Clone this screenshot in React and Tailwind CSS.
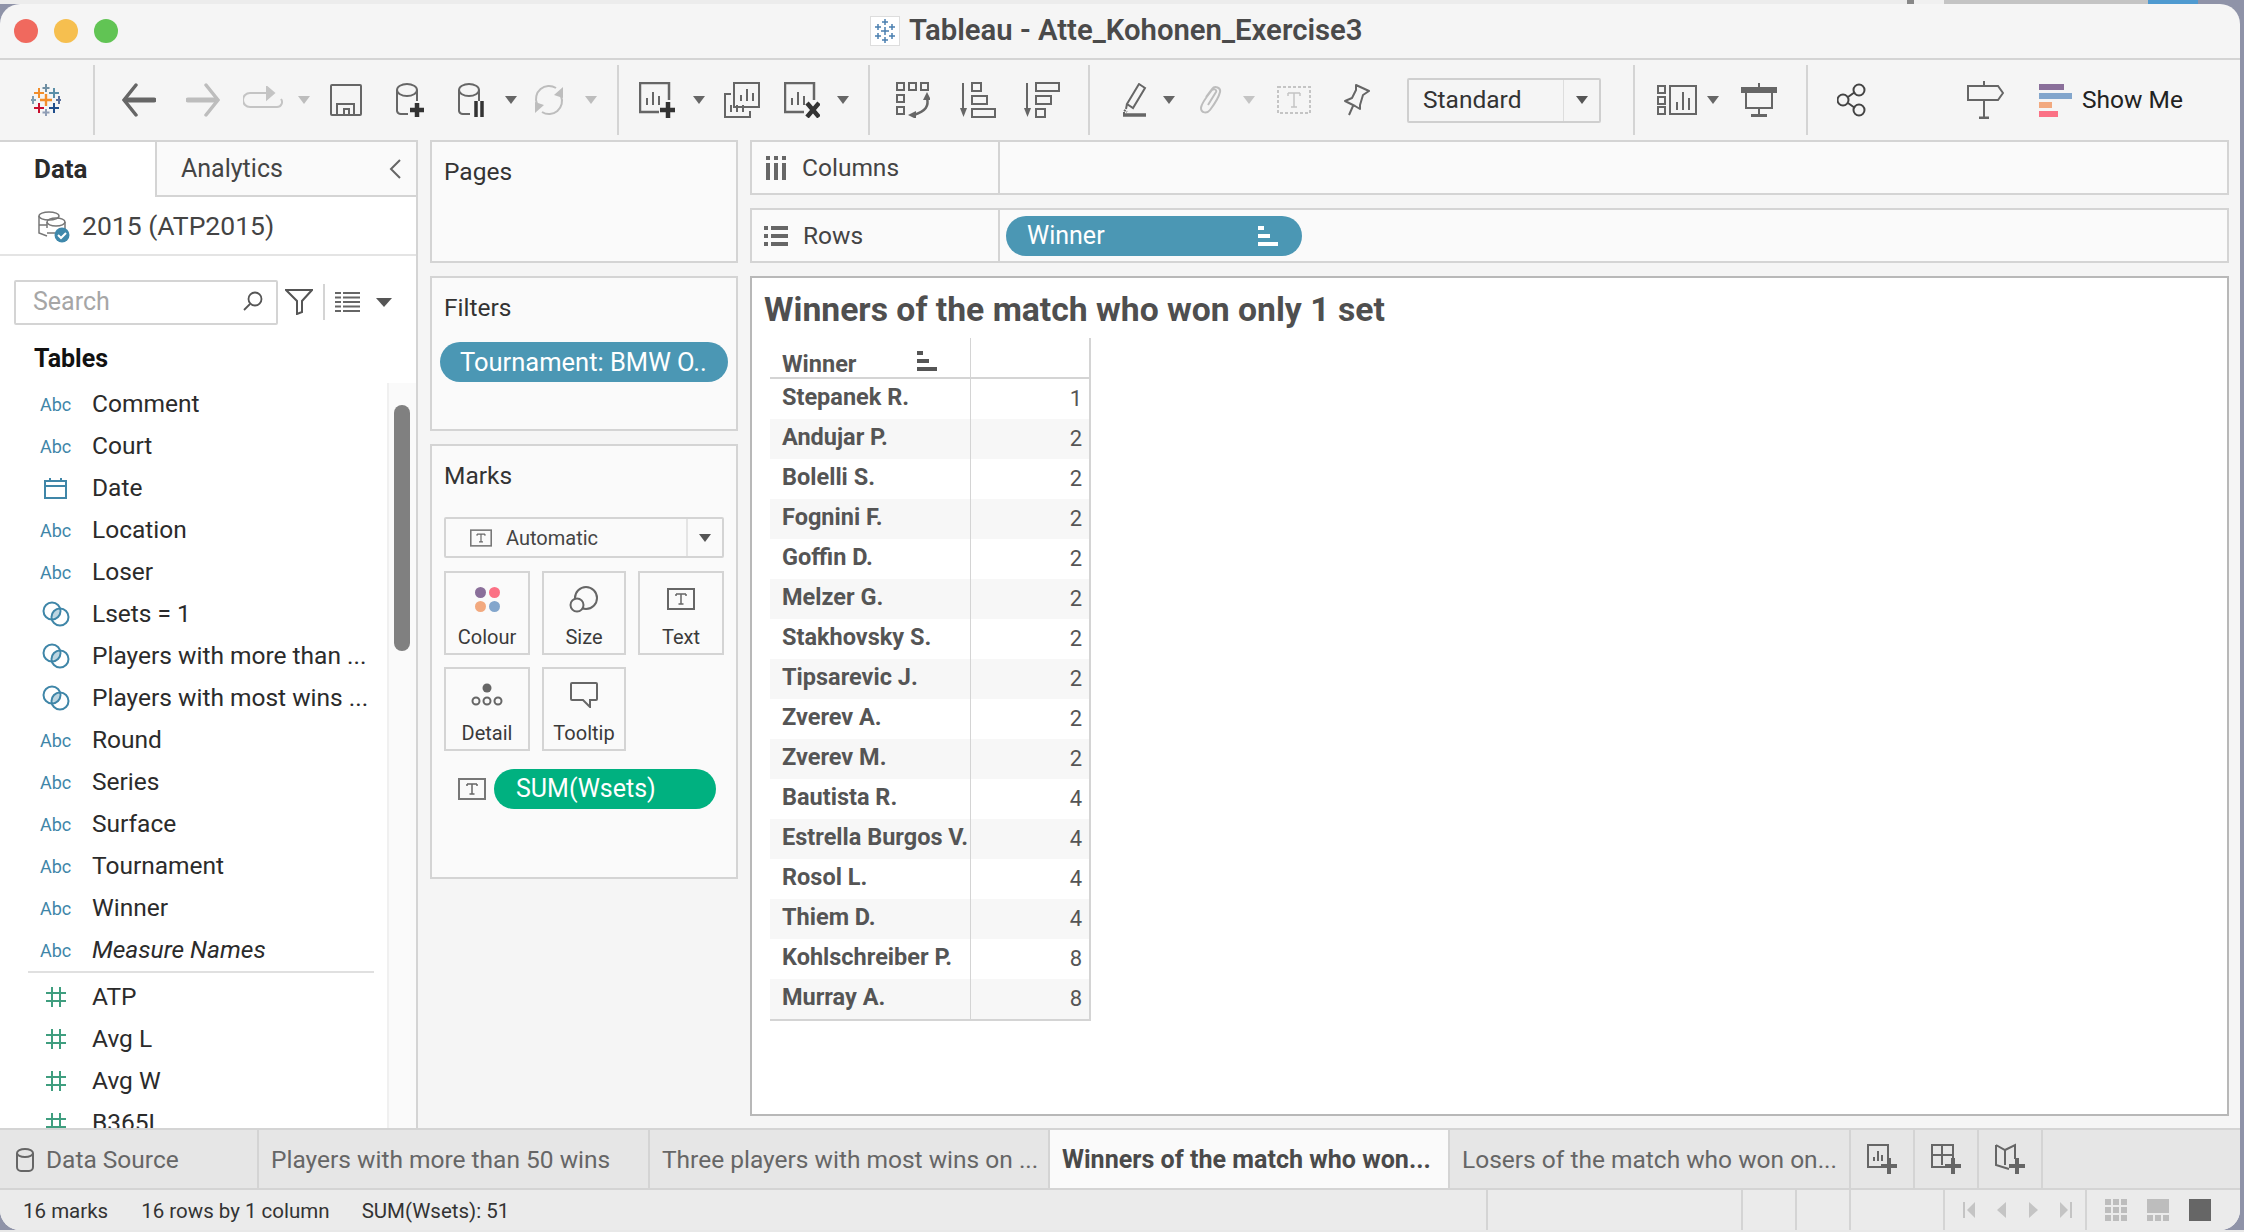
import React from 'react';

const ui = { fontFamily: 'Roboto, sans-serif' };

const Caret = ({ className = '', color = '#666' }) => (
  <svg width="12" height="8" viewBox="0 0 12 8" className={className}>
    <path d="M0 0h12L6 8z" fill={color} />
  </svg>
);

const Sep = ({ className = '' }) => <div className={`w-[2px] h-[70px] bg-[#d4d4d4] ${className}`} />;

const TableauLogo = ({ className = '' }) => (
  <svg width="30" height="32" viewBox="0 0 30 32" className={className} strokeWidth="2">
    <path d="M15 10v12M9 16h12" stroke="#f28e2b" strokeWidth="2.4" />
    <path d="M15 0v8M11.500 4h7" stroke="#6f8fa3" />
    <path d="M8 4v10M3 9h10" stroke="#f28e2b" />
    <path d="M23 4v10M18 9h10" stroke="#5b8fa8" />
    <path d="M2 12v8M-1 16h6" stroke="#7f9db0" />
    <path d="M28 12v8M25 16h6" stroke="#59709c" />
    <path d="M8 19v10M3 24h10" stroke="#c8102e" />
    <path d="M23 19v10M18 24h10" stroke="#1f4e8c" />
    <path d="M15 25v7M11.500 28.500h7" stroke="#8f9db5" />
  </svg>
);

const BackArrow = ({ className = '', color = '#666', flip }) => (
  <svg width="34" height="34" viewBox="0 0 34 34" className={className} fill="none" stroke={color} strokeLinecap="round">
    {flip ? (
      <>
        <path d="M2 17h26" strokeWidth="5" />
        <path d="M20 2l12 15-12 15" strokeWidth="3.500" />
      </>
    ) : (
      <>
        <path d="M32 17H6" strokeWidth="5" />
        <path d="M14 2L2 17l12 15" strokeWidth="3.500" />
      </>
    )}
  </svg>
);

const LoopIcon = ({ className = '' }) => (
  <svg width="40" height="28" viewBox="0 0 40 28" className={className} fill="none" stroke="#c4c4c4" strokeWidth="2">
    <path d="M24 7H7a6 6 0 0 0 0 14h27a5 5 0 0 0 4-8" />
    <path d="M24 1l7 6-7 6z" fill="#c4c4c4" />
  </svg>
);

const SaveIcon = ({ className = '' }) => (
  <svg width="32" height="32" viewBox="0 0 32 32" className={className} fill="none" stroke="#666" strokeWidth="2">
    <rect x="1" y="1" width="30" height="30" rx="1" />
    <path d="M7 31V20h17v11M14 31v-6h5v6" />
  </svg>
);

const DbIcon = ({ className = '', children }) => (
  <svg width="30" height="34" viewBox="0 0 30 34" className={className} fill="none" stroke="#666" strokeWidth="2">
    <path d="M1 7v21a4 4 0 0 0 4 3h7M21 7v11" />
    <ellipse cx="11" cy="7" rx="10" ry="6" />
    {children}
  </svg>
);

const Refresh = ({ className = '' }) => (
  <svg width="34" height="34" viewBox="0 0 34 34" className={className} fill="none" stroke="#bdbdbd" strokeWidth="2">
    <path d="M5 21A13 13 0 0 1 24 5M29 13a13 13 0 0 1-19 16" />
    <path d="M31 4v11l-9-3zM3 30V19l9 3z" fill="#bdbdbd" stroke="none" />
  </svg>
);

const SheetIcon = ({ className = '', mark }) => (
  <svg width="36" height="36" viewBox="0 0 36 36" className={className} fill="none" stroke="#666" strokeWidth="2">
    <path d="M20 30H1V1h29v17" strokeWidth="2.500" />
    <path d="M8 23v-7M14 23V10M20 23v-9" />
    {mark === 'plus' && <path d="M29 20v16M21 28h15" stroke="#333" strokeWidth="4.500" />}
    {mark === 'x' && <path d="M23 21l12 14M35 21L23 35" stroke="#333" strokeWidth="4.500" />}
  </svg>
);

const Duplicate = ({ className = '' }) => (
  <svg width="36" height="36" viewBox="0 0 36 36" className={className} fill="none" stroke="#666" strokeWidth="2">
    <rect x="10" y="1" width="25" height="24" />
    <path d="M17 19v-6M23 19V7M29 19v-8" />
    <path d="M7 12H1v23h25v-6" />
    <path d="M7 23v7M13 23v7M19 23v7" />
  </svg>
);

const SwapIcon = ({ className = '' }) => (
  <svg width="34" height="36" viewBox="0 0 34 36" className={className} fill="none" stroke="#666" strokeWidth="2">
    <rect x="1" y="1" width="7" height="7" />
    <rect x="13" y="1" width="7" height="7" />
    <rect x="25" y="1" width="7" height="7" />
    <rect x="1" y="13" width="7" height="7" />
    <rect x="1" y="25" width="7" height="7" />
    <path d="M31 16c2 8-1 13-13 17" strokeWidth="2.500" />
    <path d="M31 10l-4 8h8zM12 33l8-4v8z" fill="#666" stroke="none" />
  </svg>
);

const SortAsc = ({ className = '', desc }) => (
  <svg width="36" height="36" viewBox="0 0 36 36" className={className} fill="none" stroke="#666" strokeWidth="2">
    <path d="M3 1v28" />
    <path d="M0 26h7l-3.500 9z" fill="#666" stroke="none" />
    {desc ? (
      <>
        <rect x="12" y="1" width="23" height="8" />
        <rect x="12" y="14" width="15" height="8" />
        <rect x="12" y="27" width="9" height="8" />
      </>
    ) : (
      <>
        <rect x="12" y="1" width="9" height="8" />
        <rect x="12" y="14" width="15" height="8" />
        <rect x="12" y="27" width="23" height="8" />
      </>
    )}
  </svg>
);

const Highlighter = ({ className = '' }) => (
  <svg width="24" height="34" viewBox="0 0 24 34" className={className} fill="none" stroke="#666" strokeWidth="2">
    <path d="M16 1l6 4-12 20-6-4zM4 21l-1 5" />
    <path d="M1 27l3 2M0 30h3" strokeDasharray="2 1" />
    <path d="M0 32h23" strokeWidth="3.500" />
  </svg>
);

const Clip = ({ className = '' }) => (
  <svg width="24" height="30" viewBox="0 0 24 30" className={className} fill="none" stroke="#bdbdbd" strokeWidth="2">
    <path d="M7 12l6-8c3-4 9-1 8 3-1 5-7 14-10 18-3 4-9 3-9-2 0-3 7-13 11-18 2-2 5 0 4 2l-8 13" />
  </svg>
);

const TBox = ({ className = '' }) => (
  <svg width="34" height="28" viewBox="0 0 34 28" className={className} fill="none" stroke="#c4c4c4" strokeWidth="2">
    <rect x="1" y="1" width="32" height="26" strokeDasharray="3 2" />
    <path d="M11 7h12M17 7v14M14 21h6M11 7v3M23 7v3" strokeWidth="1.500" />
  </svg>
);

const Pin = ({ className = '' }) => (
  <svg width="26" height="32" viewBox="0 0 26 32" className={className} fill="none" stroke="#666" strokeWidth="2">
    <path d="M12 1l13 6-6 4-3 10 0 4-5-3-10-5 7-3 4-8zM9 22l-4 9" strokeLinejoin="round" />
  </svg>
);

const BarsIcon = ({ className = '' }) => (
  <svg width="40" height="30" viewBox="0 0 40 30" className={className} fill="none" stroke="#666" strokeWidth="2">
    <rect x="1" y="1" width="7" height="7" />
    <rect x="1" y="12" width="7" height="7" />
    <rect x="1" y="22" width="7" height="7" />
    <rect x="13" y="1" width="26" height="28" />
    <path d="M20 25v-8M26 25V7M32 25V13" />
  </svg>
);

const Presentation = ({ className = '' }) => (
  <svg width="36" height="34" viewBox="0 0 36 34" className={className} fill="none" stroke="#666" strokeWidth="2">
    <path d="M18 0v4M18 24v9M10 33h16" />
    <rect x="0" y="4" width="36" height="6" fill="#666" stroke="none" />
    <rect x="5" y="8" width="26" height="17" />
    <path d="M10 32.500h16" strokeWidth="3" />
  </svg>
);

const Share = ({ className = '' }) => (
  <svg width="30" height="34" viewBox="0 0 30 34" className={className} fill="none" stroke="#444" strokeWidth="2">
    <circle cx="22" cy="7" r="5.500" />
    <circle cx="6" cy="17" r="5.500" />
    <circle cx="22" cy="27" r="5.500" />
    <path d="M11 14l7-5M11 20l7 5" />
  </svg>
);

const Signpost = ({ className = '' }) => (
  <svg width="37" height="38" viewBox="0 0 37 38" className={className} fill="none" stroke="#666" strokeWidth="2">
    <path d="M17 0v5M17 20v16" />
    <path d="M1 5h30l5 7-5 7H1z" />
    <path d="M12 37h10" strokeWidth="3" />
  </svg>
);

const ShowMeIcon = ({ className = '' }) => (
  <div className={`flex flex-col gap-[3px] ${className}`}>
    <div className="w-[25px] h-[6px] bg-[#8a6f9a]" />
    <div className="w-[33px] h-[6px] bg-[#83a6cc]" />
    <div className="w-[13px] h-[6px] bg-[#f2a97f]" />
    <div className="w-[19px] h-[6px] bg-[#fb7185]" />
  </div>
);

const SortMini = ({ color = '#555' }) => (
  <svg width="20" height="20" viewBox="0 0 20 20">
    <path d="M0 0h6v4H0zM0 8h12v4H0zM0 16h20v4H0z" fill={color} />
  </svg>
);

const TIcon = ({ w = 22, h = 18, className = '', color = '#777' }) => (
  <svg width={w} height={h} viewBox="0 0 28 22" className={className} fill="none" stroke={color} strokeWidth="2">
    <rect x="1" y="1" width="26" height="20" />
    <path d="M9 6h10M14 6v10M11.500 16h5M9 6v2M19 6v2" strokeWidth="1.500" stroke="#666" />
  </svg>
);

const AbcIcon = () => <span className="text-[18px] text-[#3f86a8]">Abc</span>;

const DateIcon = () => (
  <svg width="23" height="21" viewBox="0 0 23 21" fill="none" stroke="#3f86a8" strokeWidth="2" className="ml-[4px]">
    <rect x="1" y="3" width="21" height="17" />
    <path d="M1 8h21M6 0v4M17 0v4" />
  </svg>
);

const SetIcon = () => (
  <svg width="28" height="26" viewBox="0 0 28 26" fill="none" stroke="#3f86a8" strokeWidth="2" className="ml-[2px]">
    <circle cx="10" cy="10" r="8.500" />
    <circle cx="18" cy="16" r="8.500" />
    <path d="M11 10a8 8 0 0 1 6-1 8 8 0 0 1-1 8 8 8 0 0 1-6-1z" fill="#3f86a8" fillOpacity="0.35" stroke="none" />
  </svg>
);

const HashIcon = () => (
  <svg width="20" height="20" viewBox="0 0 20 20" fill="none" stroke="#3f9e7f" strokeWidth="2" className="ml-[6px]">
    <path d="M6 0v20M14 0v20M0 6h20M0 14h20" />
  </svg>
);

const dims = [
  ['abc', 'Comment'],
  ['abc', 'Court'],
  ['date', 'Date'],
  ['abc', 'Location'],
  ['abc', 'Loser'],
  ['set', 'Lsets = 1'],
  ['set', 'Players with more than ...'],
  ['set', 'Players with most wins ...'],
  ['abc', 'Round'],
  ['abc', 'Series'],
  ['abc', 'Surface'],
  ['abc', 'Tournament'],
  ['abc', 'Winner'],
];

const measures = ['ATP', 'Avg L', 'Avg W', 'B365L'];

const FieldRow = ({ kind, label, italic }) => (
  <div className="h-[42px] flex items-center shrink-0">
    <div className="w-[52px] flex items-center">
      {kind === 'abc' && <AbcIcon />}
      {kind === 'date' && <DateIcon />}
      {kind === 'set' && <SetIcon />}
      {kind === 'hash' && <HashIcon />}
    </div>
    <span className={`text-[24.500px] text-[#2b2b2b] whitespace-nowrap ${italic ? 'italic' : ''}`}>{label}</span>
  </div>
);

const rows = [
  ['Stepanek R.', 1], ['Andujar P.', 2], ['Bolelli S.', 2], ['Fognini F.', 2],
  ['Goffin D.', 2], ['Melzer G.', 2], ['Stakhovsky S.', 2], ['Tipsarevic J.', 2],
  ['Zverev A.', 2], ['Zverev M.', 2], ['Bautista R.', 4], ['Estrella Burgos V.', 4],
  ['Rosol L.', 4], ['Thiem D.', 4], ['Kohlschreiber P.', 8], ['Murray A.', 8],
];

const MarkButton = ({ icon, label, className = '' }) => (
  <div className={`h-[84px] border-2 border-[#d4d4d4] flex flex-col items-center ${className}`}>
    <div className="h-[52px] flex items-center justify-center">{icon}</div>
    <span className="text-[20px] leading-[24px] text-[#3a3a3a]">{label}</span>
  </div>
);

const SheetTab = ({ label, className = '', active }) => (
  <div className={`h-full shrink-0 flex items-center pl-[12px] pt-[2px] border-r-2 border-[#d4d4d4] whitespace-nowrap ${active ? 'bg-[#fafafa] font-bold text-[#4a4a4a] text-[25.100px]' : 'text-[#666] text-[24.500px]'} ${className}`}>
    {label}
  </div>
);

const AddTab = ({ children }) => (
  <div className="w-[64px] h-full shrink-0 flex items-center justify-center border-r-2 border-[#d4d4d4]">{children}</div>
);

const AddIcon = ({ kind }) => (
  <svg width="32" height="32" viewBox="0 0 32 32" fill="none" stroke="#666" strokeWidth="2">
    {kind === 'sheet' && <path d="M16 24H2V2h20v14M8 18v-4M12 18V8M16 18v-6" />}
    {kind === 'dash' && <path d="M16 24H2V2h21v14M12 2v20M2 12h21" />}
    {kind === 'story' && <path d="M2 2l9 5 10-5v14M2 2v20l13 4M11 7v15" />}
    <path d="M23 15v16M15 23h16" stroke="#666" strokeWidth="4" />
  </svg>
);

const Pager = () => (
  <div className="flex items-center">
    <svg width="12" height="16" viewBox="0 0 12 16" className="ml-[18px]"><path d="M0 0h2v16H0zM12 0v16L4 8z" fill="#c4c4c4" /></svg>
    <svg width="9" height="16" viewBox="0 0 9 16" className="ml-[22px]"><path d="M9 0v16L0 8z" fill="#c4c4c4" /></svg>
    <svg width="9" height="16" viewBox="0 0 9 16" className="ml-[23px]"><path d="M0 0v16l9-8z" fill="#c4c4c4" /></svg>
    <svg width="12" height="16" viewBox="0 0 12 16" className="ml-[22px]"><path d="M10 0h2v16h-2zM0 0v16l8-8z" fill="#c4c4c4" /></svg>
  </div>
);

const FitIcons = () => (
  <div className="flex items-center gap-[20px] pl-[18px]">
    <div className="grid grid-cols-3 gap-[2px]">
      {[0, 1, 2, 3, 4, 5, 6, 7, 8].map((n) => (
        <div key={n} className="w-[6px] h-[6px] bg-[#bdbdbd]" />
      ))}
    </div>
    <div className="flex flex-col gap-[2px] w-[22px]">
      <div className="h-[14px] bg-[#bdbdbd]" />
      <div className="grid grid-cols-3 gap-[2px]">
        {[0, 1, 2].map((n) => (
          <div key={n} className="h-[6px] bg-[#bdbdbd]" />
        ))}
      </div>
    </div>
    <div className="w-[22px] h-[22px] bg-[#666]" />
  </div>
);

export default function App() {
  return (
    <div className="w-[2244px] h-[1232px] bg-[#e8e8e8] overflow-hidden flex flex-col" style={ui}>
      <div className="h-[4px] flex shrink-0">
        <div className="w-[1907px] bg-[#ececec]" />
        <div className="w-[7px] bg-[#888]" />
        <div className="w-[30px] bg-[#f0f0f0]" />
        <div className="w-[204px] bg-[#c4c4c4]" />
        <div className="w-[50px] bg-[#4f9ad0]" />
        <div className="flex-1 bg-[#8f93a8]" />
      </div>
      <div className="flex h-[1226px] shrink-0 bg-[#8f93a8]">
        <div className="w-[2240px] h-full bg-[#f5f5f5] rounded-[20px] overflow-hidden flex flex-col">
          {/* title bar */}
          <div className="h-[56px] shrink-0 border-b-2 border-[#d4d4d4] flex items-center">
            <div className="flex gap-[16px] ml-[14px]">
              <div className="w-[24px] h-[24px] rounded-full bg-[#f0695e]" />
              <div className="w-[24px] h-[24px] rounded-full bg-[#f6bf4f]" />
              <div className="w-[24px] h-[24px] rounded-full bg-[#61c454]" />
            </div>
            <div className="ml-[752px] flex items-center gap-[9px]">
              <div className="w-[30px] h-[30px] bg-white border border-[#ddd] flex items-center justify-center">
                <svg width="22" height="24" viewBox="0 0 22 24" fill="none" stroke="#4a7fb0" strokeWidth="1.500">
                  <path d="M11 0v6M8 3h6M11 8v8M7 12h8M11 18v6M8 21h6M4 5v6M1 8h6M18 5v6M15 8h6M4 14v6M1 17h6M18 14v6M15 17h6" />
                </svg>
              </div>
              <span className="text-[29.300px] font-semibold text-[#4a4a4a] whitespace-nowrap">Tableau - Atte_Kohonen_Exercise3</span>
            </div>
          </div>

          {/* toolbar */}
          <div className="h-[80px] shrink-0 flex items-center">
            <TableauLogo className="ml-[31px]" />
            <Sep className="ml-[32px]" />
            <BackArrow className="ml-[27px]" />
            <BackArrow className="ml-[30px]" color="#bdbdbd" flip />
            <LoopIcon className="ml-[23px]" />
            <Caret className="ml-[15px]" color="#bdbdbd" />
            <SaveIcon className="ml-[20px]" />
            <DbIcon className="ml-[34px]">
              <path d="M21 20v14M14 27h14" stroke="#333" strokeWidth="4.500" />
            </DbIcon>
            <DbIcon className="ml-[32px]">
              <path d="M18 18v16M24 18v16" stroke="#333" strokeWidth="3.500" />
            </DbIcon>
            <Caret className="ml-[17px]" />
            <Refresh className="ml-[15px]" />
            <Caret className="ml-[19px]" color="#bdbdbd" />
            <Sep className="ml-[20px]" />
            <SheetIcon className="ml-[20px]" mark="plus" />
            <Caret className="ml-[18px]" />
            <Duplicate className="ml-[19px]" />
            <SheetIcon className="ml-[24px]" mark="x" />
            <Caret className="ml-[17px]" />
            <Sep className="ml-[19px]" />
            <SwapIcon className="ml-[26px]" />
            <SortAsc className="ml-[30px]" />
            <SortAsc className="ml-[28px]" desc />
            <Sep className="ml-[28px]" />
            <Highlighter className="ml-[33px]" />
            <Caret className="ml-[16px]" />
            <Clip className="ml-[24px]" />
            <Caret className="ml-[20px]" color="#c4c4c4" />
            <TBox className="ml-[22px]" />
            <Pin className="ml-[33px]" />
            <div className="ml-[37px] w-[194px] h-[45px] border-2 border-[#cfcfcf] rounded-[2px] flex items-center">
              <span className="flex-1 pl-[14px] text-[24.500px] text-[#333]">Standard</span>
              <div className="w-[36px] h-full border-l border-[#ddd] flex items-center justify-center">
                <Caret color="#555" />
              </div>
            </div>
            <Sep className="ml-[32px]" />
            <BarsIcon className="ml-[22px]" />
            <Caret className="ml-[10px]" />
            <Presentation className="ml-[22px]" />
            <Sep className="ml-[29px]" />
            <Share className="ml-[29px]" />
            <Signpost className="ml-[100px]" />
            <ShowMeIcon className="ml-[35px]" />
            <span className="ml-[10px] text-[24.500px] text-[#222] whitespace-nowrap">Show Me</span>
          </div>

          {/* main area */}
          <div className="h-[988px] shrink-0 flex">
            {/* data pane */}
            <div className="w-[418px] h-full shrink-0 bg-white border-r-2 border-[#d4d4d4] border-t-2 flex flex-col">
              <div className="h-[55px] shrink-0 flex">
                <div className="w-[155px] flex items-center pl-[34px] text-[26px] font-bold text-[#2b2b2b]">Data</div>
                <div className="flex-1 bg-[#fafafa] border-l-2 border-b-2 border-[#d4d4d4] flex items-center justify-between pl-[24px] pr-[15px]">
                  <span className="text-[25px] text-[#444]">Analytics</span>
                  <svg width="12" height="20" viewBox="0 0 12 20" fill="none" stroke="#666" strokeWidth="2"><path d="M11 1L2 10l9 9" /></svg>
                </div>
              </div>
              <div className="h-[59px] shrink-0 border-b-2 border-[#e4e4e4] flex items-center pl-[37px]">
                <svg width="34" height="32" viewBox="0 0 34 32" fill="none" stroke="#777" strokeWidth="1.500" className="mt-[2px]">
                  <ellipse cx="12" cy="5" rx="10" ry="4" />
                  <ellipse cx="19" cy="11" rx="9" ry="4" />
                  <path d="M2 5v17l8 3M28 11v8M10 11v6M2 14h8M10 22h8" />
                  <circle cx="25" cy="24" r="7.500" fill="#3f88ab" stroke="none" />
                  <path d="M21 24l3 3 5-5" stroke="#fff" strokeWidth="2" />
                </svg>
                <span className="ml-[11px] text-[26.500px] text-[#444] whitespace-nowrap">2015 (ATP2015)</span>
              </div>
              <div className="h-[78px] shrink-0 flex items-center pl-[14px] pt-[14px]">
                <div className="w-[264px] h-[45px] border-2 border-[#d4d4d4] rounded-[2px] flex items-center justify-between pl-[17px] pr-[13px]">
                  <span className="text-[25px] text-[#a6a6a6]">Search</span>
                  <svg width="20" height="22" viewBox="0 0 20 22" fill="none" stroke="#555" strokeWidth="1.800"><circle cx="12" cy="8" r="6.500" /><path d="M7 13l-6 6" /></svg>
                </div>
                <svg width="28" height="26" viewBox="0 0 28 26" fill="none" stroke="#555" strokeWidth="2" className="ml-[7px]"><path d="M1 1h26L17 12v11l-5 2V12z" /></svg>
                <div className="w-[2px] h-[36px] bg-[#d4d4d4] ml-[10px]" />
                <svg width="25" height="20" viewBox="0 0 25 20" stroke="#666" strokeWidth="2" className="ml-[10px]">
                  <path d="M0 1h6M8 1h17M0 5.500h6M8 5.500h17M0 10h6M8 10h17M0 14.500h6M8 14.500h17M0 19h6M8 19h17" />
                </svg>
                <svg width="16" height="9" viewBox="0 0 16 9" className="ml-[16px]"><path d="M0 0h16L8 9z" fill="#555" /></svg>
              </div>
              <div className="h-[49px] shrink-0 flex items-center pl-[34px] text-[25px] font-bold text-[#111]">Tables</div>
              <div className="flex-1 min-h-0 flex">
                <div className="flex-1 min-w-0 pl-[40px] pr-[13px] overflow-hidden flex flex-col">
                  {dims.map(([kind, label]) => (
                    <FieldRow key={label} kind={kind} label={label} />
                  ))}
                  <FieldRow kind="abc" label="Measure Names" italic />
                  <div className="h-[2px] shrink-0 bg-[#e0e0e0] -ml-[12px] mb-[3px]" />
                  {measures.map((label) => (
                    <FieldRow key={label} kind="hash" label={label} />
                  ))}
                </div>
                <div className="w-[29px] shrink-0 bg-[#fafafa] border-l-2 border-[#f0f0f0] pl-[5px] pt-[22px]">
                  <div className="w-[16px] h-[246px] rounded-full bg-[#808080]" />
                </div>
              </div>
            </div>

            {/* shelves */}
            <div className="w-[308px] shrink-0 ml-[12px] flex flex-col gap-[13px]">
              <div className="h-[123px] shrink-0 bg-[#fafafa] border-2 border-[#d4d4d4] px-[12px] pt-[14px] text-[24.500px] leading-[32px] text-[#333]">Pages</div>
              <div className="h-[155px] shrink-0 bg-[#fafafa] border-2 border-[#d4d4d4] px-[8px] pt-[14px]">
                <div className="pl-[4px] text-[24.500px] leading-[32px] text-[#333]">Filters</div>
                <div className="mt-[18px] h-[40px] rounded-full bg-[#4b97b4] flex items-center pl-[20px] text-[25.500px] text-white whitespace-nowrap overflow-hidden">Tournament: BMW O..</div>
              </div>
              <div className="h-[435px] shrink-0 bg-[#fafafa] border-2 border-[#d4d4d4] px-[12px] pt-[14px]">
                <div className="text-[24.500px] leading-[32px] text-[#333]">Marks</div>
                <div className="mt-[25px] w-[280px] h-[41px] border-2 border-[#d4d4d4] rounded-[2px] flex items-center">
                  <div className="flex-1 flex items-center pl-[24px] gap-[14px]">
                    <TIcon />
                    <span className="text-[20px] text-[#444]">Automatic</span>
                  </div>
                  <div className="w-[36px] h-full border-l-2 border-[#e4e4e4] flex items-center justify-center">
                    <Caret color="#555" />
                  </div>
                </div>
                <div className="mt-[13px] flex flex-wrap w-[280px] gap-x-[12px] gap-y-[12px]">
                  <MarkButton
                    className="w-[86px]"
                    label="Colour"
                    icon={
                      <div className="grid grid-cols-2 gap-[3px]">
                        <div className="w-[11px] h-[11px] rounded-full bg-[#8a6f9a]" />
                        <div className="w-[11px] h-[11px] rounded-full bg-[#fb7185]" />
                        <div className="w-[11px] h-[11px] rounded-full bg-[#f2a97f]" />
                        <div className="w-[11px] h-[11px] rounded-full bg-[#83a6cc]" />
                      </div>
                    }
                  />
                  <MarkButton
                    className="w-[84px]"
                    label="Size"
                    icon={
                      <svg width="30" height="28" viewBox="0 0 30 28" fill="none" stroke="#666" strokeWidth="2">
                        <circle cx="17" cy="13" r="11" />
                        <circle cx="8" cy="20" r="6.500" fill="#fafafa" />
                      </svg>
                    }
                  />
                  <MarkButton className="w-[86px]" label="Text" icon={<TIcon w={28} h={24} color="#666" />} />
                  <MarkButton
                    className="w-[86px]"
                    label="Detail"
                    icon={
                      <svg width="32" height="24" viewBox="0 0 32 24" fill="none" stroke="#666" strokeWidth="2">
                        <circle cx="16" cy="5" r="4.500" fill="#666" stroke="none" />
                        <circle cx="5" cy="18" r="3.500" />
                        <circle cx="16" cy="18" r="3.500" />
                        <circle cx="27" cy="18" r="3.500" />
                      </svg>
                    }
                  />
                  <MarkButton
                    className="w-[84px]"
                    label="Tooltip"
                    icon={
                      <svg width="28" height="26" viewBox="0 0 28 26" fill="none" stroke="#666" strokeWidth="2">
                        <path d="M2 1h24a1 1 0 0 1 1 1v15a1 1 0 0 1-1 1h-6v7l-7-7H2a1 1 0 0 1-1-1V2a1 1 0 0 1 1-1z" />
                      </svg>
                    }
                  />
                </div>
                <div className="mt-[18px] flex items-center pl-[14px]">
                  <TIcon w={28} h={24} color="#777" />
                  <div className="ml-[8px] w-[222px] h-[40px] rounded-full bg-[#00b180] flex items-center pl-[22px] text-[25px] text-white">SUM(Wsets)</div>
                </div>
              </div>
            </div>

            {/* view */}
            <div className="w-[1479px] shrink-0 ml-[12px] flex flex-col gap-[13px]">
              <div className="h-[55px] shrink-0 bg-[#fafafa] border-2 border-[#d4d4d4] flex items-center">
                <div className="w-[248px] h-full border-r-2 border-[#d4d4d4] flex items-center pl-[13px]">
                  <svg width="22" height="24" viewBox="0 0 22 24"><path d="M1 0h4v4H1zM9 0h4v4H9zM17 0h4v4h-4zM1 7h4v17H1zM9 7h4v17H9zM17 7h4v17h-4z" fill="#666" /></svg>
                  <span className="ml-[15px] pt-[2px] text-[24.500px] text-[#444]">Columns</span>
                </div>
              </div>
              <div className="h-[55px] shrink-0 bg-[#fafafa] border-2 border-[#d4d4d4] flex items-center">
                <div className="w-[248px] h-full border-r-2 border-[#d4d4d4] flex items-center pl-[12px]">
                  <svg width="24" height="20" viewBox="0 0 24 20"><path d="M0 0h4v4H0zM7 0h17v4H7zM0 8h4v4H0zM7 8h17v4H7zM0 16h4v4H0zM7 16h17v4H7z" fill="#666" /></svg>
                  <span className="ml-[15px] pt-[2px] text-[24.500px] text-[#444]">Rows</span>
                </div>
                <div className="ml-[6px] w-[296px] h-[40px] rounded-full bg-[#4b97b4] flex items-center justify-between pl-[21px] pr-[24px] text-[25px] text-white">
                  Winner
                  <SortMini color="#fff" />
                </div>
              </div>
              <div className="h-[840px] shrink-0 bg-white border-2 border-[#b8b8b8] pl-[12px] pt-[12px]">
                <div className="text-[33.700px] leading-[40px] font-bold text-[#4f4f4f] whitespace-nowrap">Winners of the match who won only 1 set</div>
                <div className="ml-[6px] mt-[8px] w-[321px]">
                  <div className="h-[41px] flex border-b-2 border-[#d4d4d4]">
                    <div className="w-[201px] flex items-end justify-between pl-[12px] pr-[33px] border-r border-[#d4d4d4]">
                      <span className="text-[23.500px] leading-[26px] font-bold text-[#555]">Winner</span>
                      <div className="mb-[6px]"><SortMini /></div>
                    </div>
                    <div className="w-[120px] border-r-2 border-[#d4d4d4]" />
                  </div>
                  {rows.map(([name, value], i) => (
                    <div key={name} className={`h-[40px] flex ${i % 2 === 1 ? 'bg-[#f7f7f7]' : 'bg-white'}`}>
                      <div className="w-[201px] pl-[12px] border-r border-[#d4d4d4] text-[23.500px] leading-[36px] font-bold text-[#555] whitespace-nowrap">{name}</div>
                      <div className="w-[120px] pr-[7px] border-r-2 border-[#d4d4d4] text-right text-[22px] leading-[40px] text-[#555]">{value}</div>
                    </div>
                  ))}
                  <div className="h-[2px] bg-[#d4d4d4]" />
                </div>
              </div>
            </div>
          </div>

          {/* sheet tabs */}
          <div className="h-[62px] shrink-0 bg-[#e6e6e6] border-t-2 border-b-2 border-[#d4d4d4] flex">
            <SheetTab className="w-[259px]" label={
              <span className="flex items-center gap-[12px] pl-[4px]">
                <svg width="18" height="24" viewBox="0 0 18 24" fill="none" stroke="#666" strokeWidth="2"><ellipse cx="9" cy="5" rx="8" ry="4" /><path d="M1 5v14a4 4 0 0 0 4 4h8a4 4 0 0 0 4-4V5" /></svg>
                Data Source
              </span>
            } />
            <SheetTab className="w-[391px]" label="Players with more than 50 wins" />
            <SheetTab className="w-[400px]" label="Three players with most wins on ..." />
            <SheetTab className="w-[400px]" label="Winners of the match who won..." active />
            <SheetTab className="w-[401px]" label="Losers of the match who won on..." />
            <AddTab><AddIcon kind="sheet" /></AddTab>
            <AddTab><AddIcon kind="dash" /></AddTab>
            <AddTab><AddIcon kind="story" /></AddTab>
          </div>

          {/* status bar */}
          <div className="h-[40px] shrink-0 bg-[#ebebeb] flex items-center text-[20.500px] text-[#333]">
            <div className="w-[1488px] h-full flex items-center border-r-2 border-[#d4d4d4] pl-[23px] pt-[2px]">
              <span>16 marks</span>
              <span className="ml-[33px]">16 rows by 1 column</span>
              <span className="ml-[32px]">SUM(Wsets): 51</span>
            </div>
            <div className="w-[255px] h-full border-r-2 border-[#d4d4d4]" />
            <div className="w-[54px] h-full border-r-2 border-[#d4d4d4]" />
            <div className="w-[54px] h-full border-r-2 border-[#d4d4d4]" />
            <div className="w-[94px] h-full border-r-2 border-[#d4d4d4]" />
            <div className="w-[142px] h-full border-r-2 border-[#d4d4d4] flex items-center"><Pager /></div>
            <FitIcons />
          </div>
        </div>
      </div>
    </div>
  );
}
